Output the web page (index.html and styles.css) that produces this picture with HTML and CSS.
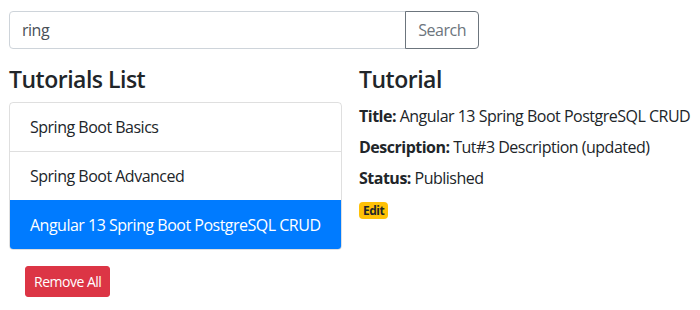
FILE: index.html
```html
<!DOCTYPE html>
<html lang="en">
<head>
  <meta charset="UTF-8"/>
  <meta name="viewport" content="width=device-width, initial-scale=1.0"/>
  <title>Tutorials</title>
  <link rel="stylesheet" href="styles.css">
</head>
<body>
  <div class="page">
    <div class="input-group">
      <input class="form-control" type="text" placeholder="Search by title" value="ring"/>
      <button class="btn btn-outline">Search</button>
    </div>

    <div class="row">
      <div class="col-list">
        <h4>Tutorials List</h4>
        <ul class="list-group">
          <li class="list-item">Spring Boot Basics</li>
          <li class="list-item">Spring Boot Advanced</li>
          <li class="list-item active">Angular 13 Spring Boot PostgreSQL CRUD</li>
        </ul>
        <button class="btn btn-sm btn-danger">Remove All</button>
      </div>

      <div class="col-detail">
        <h4>Tutorial</h4>
        <div class="fields">
          <div class="field"><label><strong>Title:</strong></label> Angular 13 Spring Boot PostgreSQL CRUD</div>
          <div class="field"><label><strong>Description:</strong></label> Tut#3 Description (updated)</div>
          <div class="field"><label><strong>Status:</strong></label> Published</div>
        </div>
        <a class="badge badge-warning" href="#">Edit</a>
      </div>
    </div>
  </div>
</body>
</html>
```
FILE: styles.css
```css
body { margin:0; font-family:"Open Sans", "Noto Sans", sans-serif; font-size:16px; line-height:1.5; letter-spacing:-0.5px; color:#212529; background:#fff; }
.page { padding:11px 0 0 9px; }
.input-group { display:flex; width:470px; margin-bottom:16px; }
.form-control { flex:1; height:38px; box-sizing:border-box; padding:6px 12px; font:inherit; letter-spacing:inherit; color:#495057; border:1px solid #ced4da; border-radius:4px 0 0 4px; outline:none; }
.btn { font-family:inherit; font-size:16px; line-height:1.5; letter-spacing:inherit; padding:6px 12px; border:1px solid transparent; border-radius:4px; background:none; cursor:pointer; }
.btn-outline { color:#6c757d; border-color:#6c757d; border-radius:0 4px 4px 0; margin-left:-1px; }
.row { display:flex; }
.col-list { flex:none; width:333px; }
.col-detail { flex:none; margin-left:17px; white-space:nowrap; }
h4 { font-size:23px; font-weight:600; line-height:29px; letter-spacing:-0.5px; margin:0 0 8px; }
.list-group { list-style:none; margin:0; padding:0; border:1px solid rgba(0,0,0,.125); border-radius:4px; overflow:hidden; }
.list-item { padding:12px 16px 12px 20px; white-space:nowrap; border-top:1px solid rgba(0,0,0,.125); }
.list-item:first-child { border-top:0; }
.list-item.active { color:#fff; background:#007bff; border-color:#007bff; }
.btn-sm { font-size:14px; padding:4px 8px; border-radius:3px; }
.btn-danger { color:#fff; background:#dc3545; border-color:#dc3545; margin:16px; }
.fields { padding-top:2px; }
.field { margin-bottom:7px; }
label { display:inline-block; }
.badge { display:inline-block; font-size:12px; font-weight:700; line-height:13px; padding:2px 4px; border-radius:4px; text-decoration:none; margin-top:4px; }
.badge-warning { color:#212529; background:#ffc107; }
```
